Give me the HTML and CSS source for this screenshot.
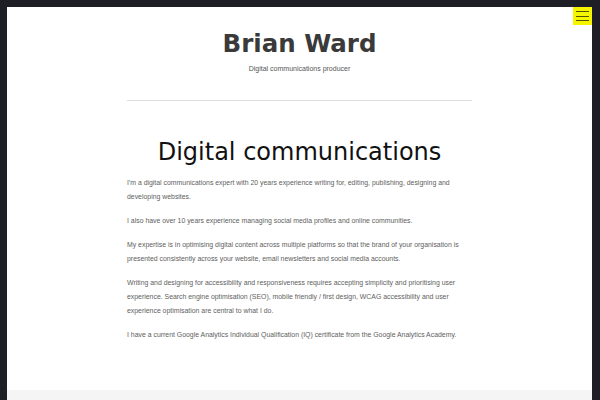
FILE: index.html
```html
<!DOCTYPE html>
<html lang="en">
<head>
<meta charset="utf-8">
<title>Brian Ward</title>
<link rel="stylesheet" href="styles.css">
</head>
<body>
<div class="frame">
  <button class="menu-toggle" aria-label="Menu">
    <span class="bar"></span><span class="bar"></span><span class="bar"></span>
  </button>
  <header class="site-header">
    <h1 class="site-title">Brian Ward</h1>
    <p class="site-desc">Digital communications producer</p>
  </header>
  <main class="content">
    <h2 class="page-title">Digital communications</h2>
    <p>I'm a digital communications expert with 20 years experience writing for, editing, publishing, designing and developing websites.</p>
    <p>I also have over 10 years experience managing social media profiles and online communities.</p>
    <p>My expertise is in optimising digital content across multiple platforms so that the brand of your organisation is presented consistently across your website, email newsletters and social media accounts.</p>
    <p>Writing and designing for accessibility and responsiveness requires accepting simplicity and prioritising user experience. Search engine optimisation (SEO), mobile friendly / first design, WCAG accessibility and user experience optimisation are central to what I do.</p>
    <p>I have a current Google Analytics Individual Qualification (IQ) certificate from the Google Analytics Academy.</p>
  </main>
  <footer class="site-footer"></footer>
</div>
</body>
</html>
```
FILE: styles.css
```css
html, body {
  margin: 0;
  padding: 0;
  height: 100%;
}
body {
  background: #1e1e25;
  overflow: hidden;
}
.frame {
  position: relative;
  margin: 7px 8px 0 7px;
  background: #ffffff;
  min-height: 393px;
  display: flex;
  flex-direction: column;
}
.menu-toggle {
  position: absolute;
  top: 0;
  right: 0;
  width: 19px;
  height: 18px;
  padding: 4px 3px;
  border: 0;
  background: #f5f500;
  display: flex;
  flex-direction: column;
  justify-content: space-between;
  cursor: pointer;
}
.menu-toggle .bar {
  display: block;
  height: 1px;
  background: #555500;
}
.site-header {
  width: 345px;
  margin: 0 auto;
  padding-top: 22px;
  padding-bottom: 25px;
  border-bottom: 1px solid #dddddd;
  text-align: center;
}
.site-title {
  margin: 0;
  font-family: "DejaVu Sans", sans-serif;
  font-weight: bold;
  font-size: 24.5px;
  line-height: 30px;
  color: #3a3a3a;
}
.site-desc {
  margin: 4px 0 0;
  font-family: "Liberation Sans", Arial, sans-serif;
  font-size: 7px;
  line-height: 12px;
  color: #555555;
}
.content {
  width: 345px;
  margin: 0 auto;
  padding-top: 34px;
  padding-bottom: 30px;
  flex: 1;
}
.page-title {
  margin: 0 0 7px;
  font-family: "DejaVu Sans", sans-serif;
  font-weight: normal;
  font-size: 24px;
  line-height: 34px;
  color: #111111;
  text-align: center;
}
.content p {
  margin: 0 0 10px;
  font-family: "Liberation Sans", Arial, sans-serif;
  font-size: 6.9px;
  line-height: 14px;
  color: #5e5e5e;
}
.site-footer {
  height: 10px;
  background: #f5f5f5;
}
```
